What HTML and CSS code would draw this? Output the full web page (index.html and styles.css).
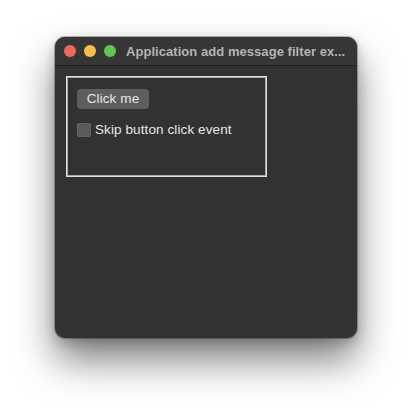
FILE: index.html
```html
<!DOCTYPE html>
<html>
<head>
<meta charset="utf-8">
<link rel="stylesheet" href="styles.css">
</head>
<body>
<div class="window">
  <div class="titlebar">
    <div class="lights">
      <span class="light red"></span>
      <span class="light yellow"></span>
      <span class="light green"></span>
    </div>
    <div class="title">Application add message filter ex...</div>
  </div>
  <div class="content">
    <div class="group">
      <button class="btn">Click me</button>
      <label class="check"><span class="box"></span><span>Skip button click event</span></label>
    </div>
  </div>
</div>
</body>
</html>
```
FILE: styles.css
```css
html, body {
  margin: 0;
  padding: 0;
  background: #ffffff;
}
body {
  padding: 37px 0 0 55px;
  min-height: 412px;
  box-sizing: border-box;
  font-family: "Helvetica Neue", "Liberation Sans", Arial, sans-serif;
}
.window {
  width: 302px;
  height: 301px;
  background: #323232;
  border-radius: 10px;
  box-shadow: 0 0 0 1px rgba(0,0,0,0.25), 0 22px 38px rgba(0,0,0,0.5), 0 4px 12px rgba(0,0,0,0.2);
  overflow: hidden;
  display: flex;
  flex-direction: column;
}
.titlebar {
  height: 28px;
  flex: none;
  display: flex;
  align-items: center;
  background: #363636;
  border-bottom: 1px solid #1e1e1e;
  padding-left: 9px;
}
.lights {
  display: flex;
  gap: 8px;
  flex: none;
}
.light {
  width: 12px;
  height: 12px;
  border-radius: 50%;
  display: block;
}
.red { background: #ec6a5e; }
.yellow { background: #f4bf4f; }
.green { background: #61c554; }
.title {
  margin-left: 10px;
  color: #b4b4b4;
  font-weight: bold;
  font-size: 13px;
  letter-spacing: 0.05px;
  white-space: nowrap;
  padding-top: 1px;
}
.content {
  padding: 10px 0 0 11px;
}
.group {
  width: 189px;
  height: 87px;
  border: 1px solid #e2e2e2;
  box-shadow: inset 0 0 0 1px #a8a8a8;
  padding: 12px 0 0 10px;
  display: flex;
  flex-direction: column;
  align-items: flex-start;
}
.btn {
  width: 72px;
  height: 20px;
  background: #5e5e5e;
  border: none;
  border-radius: 4px;
  color: #e6e6e6;
  font-family: inherit;
  font-size: 13.5px;
  letter-spacing: 0.1px;
  padding: 0;
  margin: 0;
  line-height: 20px;
}
.check {
  margin-top: 13px;
  display: flex;
  align-items: center;
  color: #e6e6e6;
  font-size: 13.5px;
  letter-spacing: 0.1px;
}
.box {
  width: 14px;
  height: 14px;
  background: #5a5a5a;
  border-radius: 3px;
  margin-right: 4px;
  display: block;
  box-shadow: inset 0 0 0 0.5px #6a6a6a;
}
```
